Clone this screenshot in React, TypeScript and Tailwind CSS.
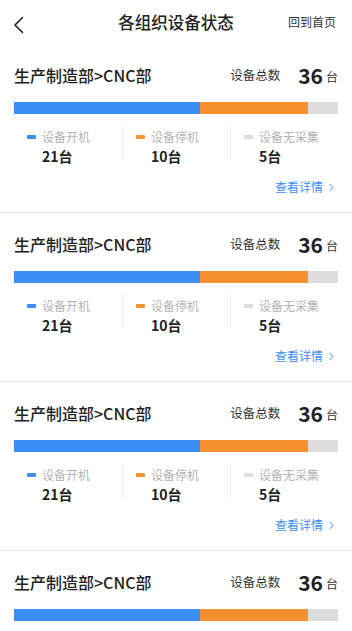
import { ChevronRight } from 'lucide-react';

const font = { fontFamily: '"Noto Sans CJK SC", "Noto Sans", sans-serif' };

function Card() {
  const legend = [
    { label: "设备开机", value: "21台", color: "bg-[#3a8ef6]" },
    { label: "设备停机", value: "10台", color: "bg-[#f5922f]" },
    { label: "设备无采集", value: "5台", color: "bg-[#dcdcdc]" },
  ];

  return (
    <div className="bg-white">
      <div className="px-[14px] pt-[20px] pb-[17px]">
        <div className="flex items-center justify-between h-[22px]">
          <span className="text-[16px] font-medium text-[#222] leading-[22px]">生产制造部&gt;CNC部</span>
          <div className="flex items-center">
            <span className="text-[12.5px] text-[#333]">设备总数</span>
            <span className="ml-[18px] text-[21px] font-bold text-[#222] leading-none">36</span>
            <span className="ml-[3px] text-[12px] text-[#333] mt-[3px]">台</span>
          </div>
        </div>

        <div className="mt-[16px] flex h-[12px]">
          <div className="w-[186px] bg-[#3a8ef6]" />
          <div className="w-[108px] bg-[#f5922f]" />
          <div className="flex-1 bg-[#dcdcdc]" />
        </div>

        <div className="mt-[11px] flex">
          {legend.map((item, idx) => (
            <div key={idx} className="flex flex-1">
              {idx > 0 && <div className="w-px h-[35px] bg-[#ececec]" />}
              <div className="flex-1 pl-[13px] pt-[4px]">
                <div className="flex items-center h-[16px]">
                  <span className={`w-[9px] h-[4px] rounded-[1px] ${item.color}`} />
                  <span className="ml-[6px] text-[12px] text-[#b3b3b3] leading-[16px]">{item.label}</span>
                </div>
                <div className="mt-[2px] pl-[15px] text-[14px] font-bold text-[#222] leading-[18px]">{item.value}</div>
              </div>
            </div>
          ))}
        </div>

        <div className="mt-[14px] flex justify-end items-center h-[16px] text-[#3b8df0]">
          <span className="text-[12px] leading-[16px]">查看详情</span>
          <ChevronRight size={13} strokeWidth={1.8} className="ml-[2px]" />
        </div>
      </div>
      <div className="h-px bg-[#e8e8e8]" />
    </div>
  );
}

export default function App() {
  return (
    <div className="w-[352px] h-[631px] bg-white overflow-hidden" style={font}>
      <div className="relative h-[44px] flex items-center justify-center">
        {/* back arrow */}
        <svg className="absolute left-[13px] top-[16px]" width="11" height="18" viewBox="0 0 11 18" fill="none">
          <polyline points="9.5,1.5 2,9 9.5,16.5" stroke="#222" strokeWidth="1.6" strokeLinecap="round" strokeLinejoin="round" />
        </svg>
        <span className="text-[16.5px] font-medium text-[#222]">各组织设备状态</span>
        <span className="absolute right-[16px] top-[14px] text-[12px] text-[#333] leading-[16px]">回到首页</span>
      </div>
      {[0, 1, 2, 3].map((i) => (
        <Card key={i} />
      ))}
    </div>
  );
}
